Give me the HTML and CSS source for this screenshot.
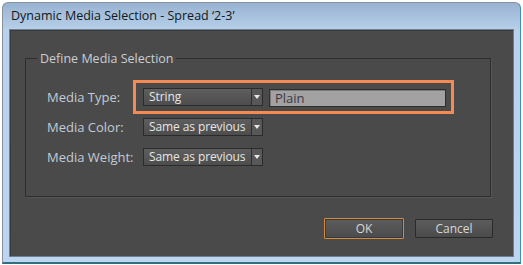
FILE: index.html
```html
<!DOCTYPE html>
<html>
  <head>
    <meta name="viewport" content="width=device-width, initial-scale=1">
    <link rel="stylesheet" href="styles.css">
  </head>

  <body>
    <div class="window">
      <div class="titlebar">Dynamic Media Selection - Spread ‘2-3’</div>

      <div class="content">
        <fieldset class="group">
          <legend>Define Media Selection</legend>

          <div class="rows">
            <label>Media Type:</label>
            <div class="controls highlight">
              <div class="dropdown"><span>String</span><i class="arrow"></i></div>
              <div class="field">Plain</div>
            </div>

            <label>Media Color:</label>
            <div class="controls">
              <div class="dropdown"><span>Same as previous</span><i class="arrow"></i></div>
            </div>

            <label>Media Weight:</label>
            <div class="controls">
              <div class="dropdown"><span>Same as previous</span><i class="arrow"></i></div>
            </div>
          </div>
        </fieldset>

        <!-- OK / Cancel -->
        <div class="buttons">
          <button type="button" class="btn btn-default">OK</button>
          <button type="button" class="btn">Cancel</button>
        </div>
      </div>
    </div>
  </body>
</html>
```

FILE: styles.css
```css
html, body {
  margin: 0;
  background-color: #ffffff;
  font-family: "Open Sans", "Noto Sans", sans-serif;
  font-size: 12px;
}

.window {
  margin: 2px;
  width: 517px;
  height: 259px;
  border: 1px solid #8a9099;
  border-right-color: #3f8fb0;
  border-bottom: 2px solid #2f6f80;
  border-radius: 6px 6px 0 0;
  background: linear-gradient(#98b3d2, #b9d1ea 28px, #bdd5ee);
  display: flex;
  flex-direction: column;
}

.titlebar {
  height: 26px;
  line-height: 25px;
  padding-left: 8px;
  color: #101820;
  font-size: 12.5px;
}

.content {
  flex-grow: 1;
  margin: 0 6px 5px 6px;
  background-color: #4a4a4a;
  border: 1px solid #6e7f94;
  box-shadow: inset 1px 1px 0 #3a3a3a;
  display: flex;
  flex-direction: column;
}

.group {
  margin: 20px 22px 0 15px;
  padding: 21px 0 20px 21px;
  height: 104px;
  border: 1px solid #2e2e2e;
  box-shadow: 1px 1px 0 #555;
}

.group legend {
  margin-left: -10px;
  padding: 0 3px;
  color: #c9ced4;
  font-size: 12.5px;
}

.rows {
  display: grid;
  grid-template-columns: 96px auto;
  grid-auto-rows: 18px;
  row-gap: 12px;
  align-items: center;
  justify-items: start;
}

.rows label {
  color: #c3ccd6;
  font-size: 13px;
}

.controls {
  display: flex;
  align-items: center;
  gap: 6px;
  position: relative;
}

/* annotation box round the first row */
.highlight::before {
  content: "";
  position: absolute;
  left: -10px;
  top: -7px;
  right: -8px;
  bottom: -7px;
  border: 3px solid #f58b52;
}

.dropdown {
  width: 118px;
  height: 16px;
  border: 1px solid #2b2b2b;
  background: linear-gradient(#5e5e5e, #4d4d4d);
  color: #e6e6e6;
  font-size: 12px;
  letter-spacing: -0.1px;
  line-height: 16px;
  display: flex;
}

.dropdown span {
  flex-grow: 1;
  padding-left: 5px;
  border-right: 1px solid #2e2e2e;
  white-space: nowrap;
  overflow: hidden;
}

.arrow {
  width: 10px;
  position: relative;
  background: #585858;
}

.arrow::after {
  content: "";
  position: absolute;
  left: 2px;
  top: 6px;
  border-left: 3px solid transparent;
  border-right: 3px solid transparent;
  border-top: 4px solid #e8e8e8;
}

.field {
  width: 170px;
  height: 16px;
  padding-left: 5px;
  margin-top: 2px;
  border: 1px solid #2e2e2e;
  box-shadow: inset 1px 1px 0 #7a7a7a;
  background-color: #a2a2a2;
  color: #3a3845;
  font-size: 13px;
  line-height: 16px;
}

.buttons {
  margin: 21px 20px 0 0;
  display: flex;
  justify-content: flex-end;
  align-items: center;
  gap: 11px;
}

.btn {
  width: 78px;
  height: 19px;
  padding: 0;
  border: 1px solid #2a2a2a;
  border-radius: 1px;
  background: linear-gradient(#5c5c5c, #4b4b4b);
  color: #d8d8d8;
  font-family: "Open Sans", "Noto Sans", sans-serif;
  font-size: 12px;
  cursor: pointer;
}

.btn-default {
  width: 80px;
  height: 21px;
  border-color: #d48a3a;
  box-shadow: inset 0 0 0 1px #3a3a3a;
}
```
